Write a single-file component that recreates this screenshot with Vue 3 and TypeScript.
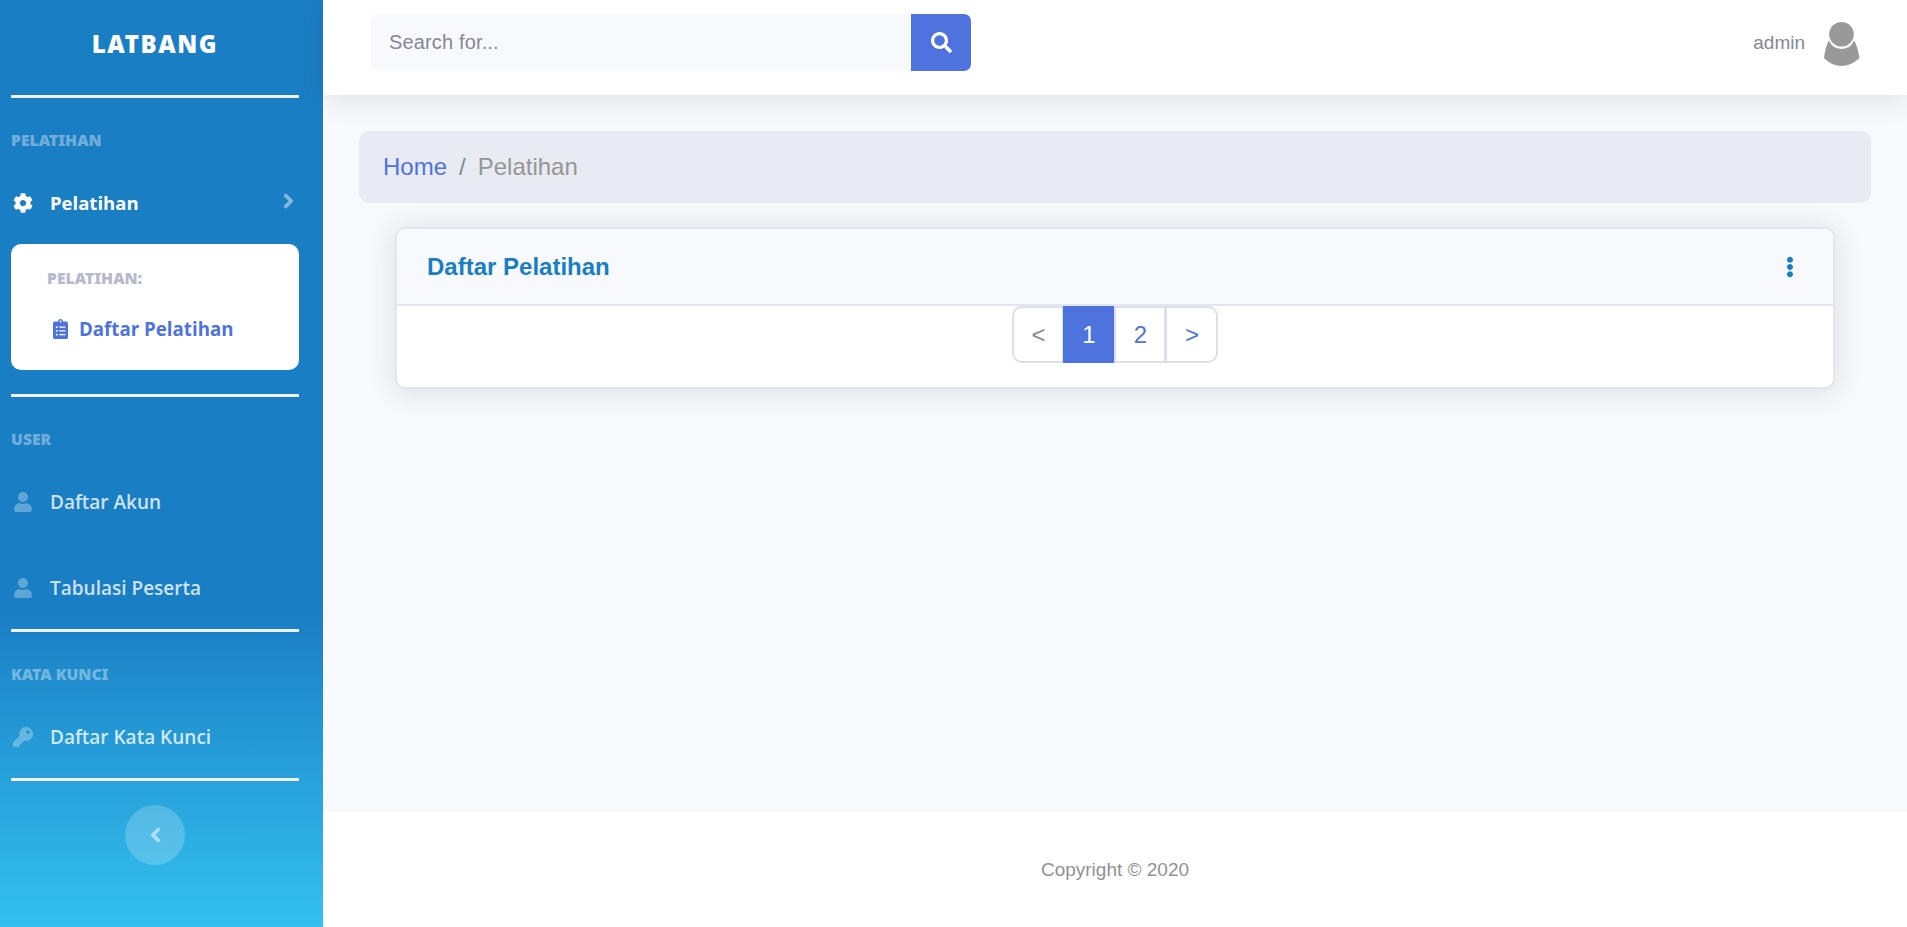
<script setup lang="ts">
const icons = {
  cog: 'M487.4 315.7l-42.6-24.6c4.3-23.2 4.3-47 0-70.2l42.6-24.6c4.9-2.8 7.1-8.6 5.5-14-11.1-35.6-30-67.8-54.7-94.6-3.8-4.1-10-5.1-14.8-2.3L380.8 110c-17.9-15.4-38.5-27.3-60.8-35.1V25.8c0-5.6-3.9-10.5-9.4-11.7-36.7-8.2-74.3-7.8-109.2 0-5.5 1.2-9.4 6.1-9.4 11.7V75c-22.2 7.9-42.8 19.8-60.8 35.1L88.7 85.5c-4.9-2.8-11-1.9-14.8 2.3-24.7 26.7-43.6 58.9-54.7 94.6-1.7 5.4.6 11.2 5.5 14L67.3 221c-4.3 23.2-4.3 47 0 70.2l-42.6 24.6c-4.9 2.8-7.1 8.6-5.5 14 11.1 35.6 30 67.8 54.7 94.6 3.8 4.1 10 5.1 14.8 2.3l42.6-24.6c17.9 15.4 38.5 27.3 60.8 35.1v49.2c0 5.6 3.9 10.5 9.4 11.7 36.7 8.2 74.3 7.8 109.2 0 5.5-1.2 9.4-6.1 9.4-11.7v-49.2c22.2-7.9 42.8-19.8 60.8-35.1l42.6 24.6c4.9 2.8 11 1.9 14.8-2.3 24.7-26.7 43.6-58.9 54.7-94.6 1.5-5.5-.7-11.3-5.6-14.1zM256 336c-44.1 0-80-35.9-80-80s35.9-80 80-80 80 35.9 80 80-35.9 80-80 80z',
  user: 'M224 256c70.7 0 128-57.3 128-128S294.7 0 224 0 96 57.3 96 128s57.3 128 128 128zm89.6 32h-16.7c-22.2 10.2-46.9 16-72.9 16s-50.6-5.8-72.9-16h-16.7C60.2 288 0 348.2 0 422.4V464c0 26.5 21.5 48 48 48h352c26.5 0 48-21.5 48-48v-41.6c0-74.2-60.2-134.4-134.4-134.4z',
  key: 'M512 176.001C512 273.203 433.202 352 336 352c-11.22 0-22.19-1.062-32.827-3.069l-24.012 27.014A23.999 23.999 0 0 1 261.223 384H224v40c0 13.255-10.745 24-24 24h-40v40c0 13.255-10.745 24-24 24H24c-13.255 0-24-10.745-24-24v-78.059c0-6.365 2.529-12.47 7.029-16.971l161.802-161.802C163.108 213.814 160 195.271 160 176 160 78.798 238.797.001 335.999 0 433.488-.001 512 78.511 512 176.001zM336 128c0 26.51 21.49 48 48 48s48-21.49 48-48-21.49-48-48-48-48 21.49-48 48z',
  clipboard: 'M336 64h-80c0-35.3-28.7-64-64-64s-64 28.7-64 64H48C21.5 64 0 85.5 0 112v352c0 26.5 21.5 48 48 48h288c26.5 0 48-21.5 48-48V112c0-26.5-21.5-48-48-48zM96 424c-13.3 0-24-10.7-24-24s10.7-24 24-24 24 10.7 24 24-10.7 24-24 24zm0-96c-13.3 0-24-10.7-24-24s10.7-24 24-24 24 10.7 24 24-10.7 24-24 24zm0-96c-13.3 0-24-10.7-24-24s10.7-24 24-24 24 10.7 24 24-10.7 24-24 24zm96-192c13.3 0 24 10.7 24 24s-10.7 24-24 24-24-10.7-24-24 10.7-24 24-24zm128 368c0 4.4-3.6 8-8 8H168c-4.4 0-8-3.6-8-8v-16c0-4.4 3.6-8 8-8h144c4.4 0 8 3.6 8 8v16zm0-96c0 4.4-3.6 8-8 8H168c-4.4 0-8-3.6-8-8v-16c0-4.4 3.6-8 8-8h144c4.4 0 8 3.6 8 8v16zm0-96c0 4.4-3.6 8-8 8H168c-4.4 0-8-3.6-8-8v-16c0-4.4 3.6-8 8-8h144c4.4 0 8 3.6 8 8v16z',
  chevronRight: 'M285.476 272.971L91.132 467.314c-9.373 9.373-24.569 9.373-33.941 0l-22.667-22.667c-9.357-9.357-9.375-24.522-.04-33.901L188.505 256 34.484 101.255c-9.335-9.379-9.317-24.544.04-33.901l22.667-22.667c9.373-9.373 24.569-9.373 33.941 0L285.475 239.03c9.373 9.372 9.373 24.568.001 33.941z',
  chevronLeft: 'M34.52 239.03L228.87 44.69c9.37-9.37 24.57-9.37 33.94 0l22.67 22.67c9.36 9.36 9.37 24.52.04 33.9L131.49 256l154.02 154.75c9.34 9.38 9.32 24.54-.04 33.9l-22.67 22.67c-9.37 9.37-24.57 9.37-33.94 0L34.52 272.97c-9.37-9.37-9.37-24.57 0-33.94z',
  search: 'M505 442.7L405.3 343c-4.5-4.5-10.6-7-17-7H372c27.6-35.3 44-79.7 44-128C416 93.1 322.9 0 208 0S0 93.1 0 208s93.1 208 208 208c48.3 0 92.7-16.4 128-44v16.3c0 6.4 2.5 12.5 7 17l99.7 99.7c9.4 9.4 24.6 9.4 33.9 0l28.3-28.3c9.4-9.4 9.4-24.6.1-34zM208 336c-70.7 0-128-57.2-128-128 0-70.7 57.2-128 128-128 70.7 0 128 57.2 128 128 0 70.7-57.2 128-128 128z',
  dots: 'M96 184c39.8 0 72 32.2 72 72s-32.2 72-72 72-72-32.2-72-72 32.2-72 72-72zM24 80c0 39.8 32.2 72 72 72s72-32.2 72-72S135.8 8 96 8 24 40.2 24 80zm0 352c0 39.8 32.2 72 72 72s72-32.2 72-72-32.2-72-72-72-72 32.2-72 72z'
}
</script>

<template>
  <div class="page">
    <aside class="sidebar">
      <div class="brand">LATBANG</div>
      <hr class="divider" />
      <div class="heading">PELATIHAN</div>
      <a class="nav-item active">
        <svg class="nav-icon" viewBox="0 0 512 512"><path :d="icons.cog" /></svg>
        <span>Pelatihan</span>
        <svg class="caret" viewBox="0 0 320 512"><path :d="icons.chevronRight" /></svg>
      </a>
      <div class="submenu">
        <div class="sub-title">PELATIHAN:</div>
        <a class="sub-link">
          <svg class="sub-icon" viewBox="0 0 384 512"><path :d="icons.clipboard" /></svg>
          <span>Daftar Pelatihan</span>
        </a>
      </div>
      <hr class="divider after-sub" />
      <div class="heading">USER</div>
      <a class="nav-item">
        <svg class="nav-icon" viewBox="0 0 448 512"><path :d="icons.user" /></svg>
        <span>Daftar Akun</span>
      </a>
      <a class="nav-item second">
        <svg class="nav-icon" viewBox="0 0 448 512"><path :d="icons.user" /></svg>
        <span>Tabulasi Peserta</span>
      </a>
      <hr class="divider after-nav" />
      <div class="heading">KATA KUNCI</div>
      <a class="nav-item">
        <svg class="nav-icon" viewBox="0 0 512 512"><path :d="icons.key" /></svg>
        <span>Daftar Kata Kunci</span>
      </a>
      <hr class="divider after-nav" />
      <button class="toggle" type="button">
        <svg viewBox="0 0 320 512"><path :d="icons.chevronLeft" /></svg>
      </button>
    </aside>

    <div class="wrapper">
      <header class="topbar">
        <div class="search">
          <span class="search-input">Search for...</span>
          <button class="search-btn" type="button">
            <svg viewBox="0 0 512 512"><path :d="icons.search" /></svg>
          </button>
        </div>
        <div class="account">
          <span>admin</span>
          <svg class="avatar" viewBox="0 0 36 44">
            <circle cx="17.5" cy="12.3" r="12.3" />
            <path d="M5 18.5 A13.5 13.5 0 0 0 30 18.5 C32 21 34.5 29 35.5 36 C30 41 24 44 17.5 44 C11 44 5 41 0 36 C1 29 3 21 5 18.5 Z" />
          </svg>
        </div>
      </header>

      <main class="content">
        <nav class="breadcrumb">
          <a class="crumb-link">Home</a>
          <span class="crumb-sep">/</span>
          <span class="crumb-current">Pelatihan</span>
        </nav>
        <section class="card">
          <div class="card-header">
            <h6>Daftar Pelatihan</h6>
            <svg class="dots" viewBox="0 0 192 512"><path :d="icons.dots" /></svg>
          </div>
          <div class="card-body">
            <ul class="pagination">
              <li class="prev">&lt;</li>
              <li class="current">1</li>
              <li>2</li>
              <li>&gt;</li>
            </ul>
          </div>
        </section>
      </main>

      <footer class="footer">Copyright © 2020</footer>
    </div>
  </div>
</template>

<style scoped>
.page {
  display: flex;
  min-height: 927px;
  font-family: "Liberation Sans", Arial, sans-serif;
  background: #f8f9fc;
}

.sidebar {
  width: 323px;
  flex-shrink: 0;
  box-sizing: border-box;
  padding-bottom: 60px;
  background: linear-gradient(180deg, #1a7ec4 0%, #1a7ec4 66%, #33c1ef 100%);
  font-family: "Open Sans", "Noto Sans", sans-serif;
  display: flex;
  flex-direction: column;
}

.brand {
  height: 95px;
  display: flex;
  align-items: center;
  justify-content: center;
  padding-right: 13px;
  padding-bottom: 8px;
  box-sizing: border-box;
  color: #fff;
  font-family: "Noto Sans", "Open Sans", sans-serif;
  font-size: 24px;
  font-weight: 900;
  letter-spacing: 1.6px;
}

.divider {
  width: 288px;
  height: 3px;
  border: 0;
  margin: 0 0 0 11px;
  background: #f0f0f3;
  flex-shrink: 0;
}

.divider.after-sub {
  margin-top: 24px;
}

.divider.after-nav {
  margin-top: 11px;
}

.heading {
  height: 24px;
  line-height: 24px;
  margin-top: 30px;
  padding-left: 11px;
  color: rgba(255, 255, 255, 0.4);
  font-family: "Noto Sans", "Open Sans", sans-serif;
  font-size: 15.7px;
  font-weight: 900;
}

.nav-item {
  height: 60px;
  flex-shrink: 0;
  margin-top: 21px;
  display: flex;
  align-items: center;
  width: 288px;
  box-sizing: border-box;
  margin-left: 11px;
  padding: 0 5px 0 2px;
  color: rgba(255, 255, 255, 0.8);
  font-size: 19px;
  font-weight: 600;
}

.nav-item.second {
  margin-top: 26px;
}

.nav-item.active {
  color: #fff;
  font-size: 18.5px;
  font-weight: 700;
}

.nav-item.active span {
  margin-bottom: 2px;
}

.nav-icon {
  width: 20px;
  height: 20px;
  margin-right: 17px;
  fill: rgba(255, 255, 255, 0.3);
  flex-shrink: 0;
}

.nav-item.active .nav-icon {
  fill: #fff;
}

.caret {
  width: 11px;
  height: 16px;
  margin-left: auto;
  margin-bottom: 4px;
  fill: #fff;
  stroke: #fff;
  stroke-width: 36;
  opacity: 0.45;
}

.submenu {
  width: 288px;
  height: 126px;
  flex-shrink: 0;
  box-sizing: border-box;
  margin: 11px 0 0 11px;
  padding: 22px 0 0 36px;
  border-radius: 10px;
  background: #fff;
}

.sub-title {
  height: 24px;
  line-height: 24px;
  color: #b7b9cc;
  font-family: "Noto Sans", "Open Sans", sans-serif;
  font-size: 15.7px;
  font-weight: 900;
}

.sub-link {
  display: flex;
  align-items: center;
  margin-top: 26px;
  color: #4e73df;
  font-size: 18.7px;
  font-weight: 700;
}

.sub-icon {
  width: 15px;
  height: 20px;
  margin: 0 11px 0 6px;
  fill: #4e73df;
}

.toggle {
  width: 60px;
  height: 60px;
  margin: 24px 0 0 125px;
  padding: 0;
  border: 0;
  border-radius: 50%;
  background: rgba(255, 255, 255, 0.2);
  display: flex;
  align-items: center;
  justify-content: center;
  flex-shrink: 0;
}

.toggle svg {
  width: 11px;
  height: 16px;
  fill: #fff;
  stroke: #fff;
  stroke-width: 36;
  opacity: 0.5;
}

.wrapper {
  flex: 1;
  min-width: 0;
  display: flex;
  flex-direction: column;
}

.topbar {
  height: 95px;
  box-sizing: border-box;
  padding: 14px 47px 24px 48px;
  display: flex;
  align-items: flex-start;
  justify-content: space-between;
  background: #fff;
  box-shadow: 0 2.4px 28px rgba(58, 59, 69, 0.15);
  position: relative;
}

.search {
  width: 600px;
  height: 57px;
  display: flex;
  border-radius: 7px;
  overflow: hidden;
  background: #f8f9fc;
}

.search-input {
  flex: 1;
  padding-left: 18px;
  line-height: 57px;
  color: #858796;
  font-size: 20px;
  letter-spacing: 0.15px;
}

.search-btn {
  width: 60px;
  padding: 0;
  border: 0;
  background: #4e73df;
  display: flex;
  align-items: center;
  justify-content: center;
}

.search-btn svg {
  width: 21px;
  height: 21px;
  fill: #fff;
}

.account {
  display: flex;
  align-items: center;
  height: 57px;
  color: #858796;
  font-size: 19px;
}

.avatar {
  width: 36px;
  height: 44px;
  margin-left: 19px;
  margin-top: 3px;
  fill: #999;
}

.content {
  flex: 1;
  padding: 36px 36px 0;
}

.breadcrumb {
  height: 72px;
  box-sizing: border-box;
  padding-left: 24px;
  display: flex;
  align-items: center;
  border-radius: 10px;
  background: #e9ebf3;
  font-size: 24px;
}

.crumb-link {
  color: #4e73df;
}

.crumb-sep {
  margin: 0 12px;
  color: #858796;
}

.crumb-current {
  color: #969696;
}

.card {
  margin: 24px 36px 0;
  border: 2px solid #e3e6f0;
  border-radius: 10px;
  background: #fff;
  box-shadow: 0 2.4px 28px rgba(58, 59, 69, 0.15);
  overflow: hidden;
}

.card-header {
  height: 77px;
  box-sizing: border-box;
  padding: 0 39px 0 30px;
  display: flex;
  align-items: center;
  justify-content: space-between;
  background: #f8f9fc;
  border-bottom: 2px solid #e3e6f0;
}

.card-header h6 {
  margin: 0;
  color: #1a7ec4;
  font-size: 24px;
  font-weight: 700;
}

.dots {
  width: 8px;
  height: 22px;
  fill: #1a7ec4;
}

.card-body {
  height: 81px;
  display: flex;
  justify-content: center;
  align-items: flex-start;
}

.pagination {
  display: flex;
  margin: 0;
  padding: 0;
  list-style: none;
  color: #4e73df;
  font-size: 24px;
}

.pagination li {
  width: 52px;
  height: 57px;
  box-sizing: border-box;
  margin-left: -1px;
  padding-left: 1px;
  display: flex;
  align-items: center;
  justify-content: center;
  background: #fff;
  border: 2px solid #dddfeb;
}

.pagination li:first-child {
  margin-left: 0;
  border-radius: 10px 0 0 10px;
}

.pagination li:last-child {
  width: 53px;
  border-radius: 0 10px 10px 0;
}

.pagination .prev {
  color: #858796;
}

.pagination .current {
  width: 51px;
  color: #fff;
  background: #4e73df;
  border-color: #4e73df;
  position: relative;
}

.pagination .current + li {
  margin-left: 0;
}

.footer {
  height: 115px;
  box-sizing: border-box;
  display: flex;
  align-items: center;
  justify-content: center;
  background: #fff;
  color: #929292;
  font-size: 19px;
}
</style>
